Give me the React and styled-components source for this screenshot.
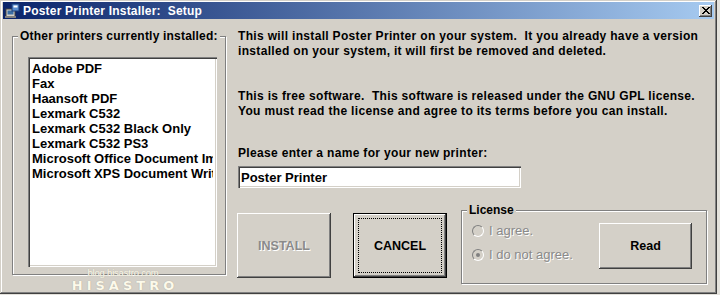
import React from "react";
import styled, { createGlobalStyle } from "styled-components";

const GlobalStyle = createGlobalStyle`
  html, body {
    margin: 0;
    padding: 0;
    background: #e4e2dc;
  }
  body {
    font-family: "Liberation Sans", Arial, sans-serif;
    font-size: 12px;
    font-weight: bold;
    color: #000;
  }
`;

const Window = styled.div`
  position: relative;
  box-sizing: border-box;
  width: 717px;
  height: 294px;
  padding: 2px 3px 3px 3px;
  background: #d4d0c8;
  box-shadow: inset -1px -1px 0 #404040, inset 1px 1px 0 #d4d0c8,
    inset -2px -2px 0 #808080, inset 2px 2px 0 #ffffff;
  display: flex;
  flex-direction: column;
`;

const TitleBar = styled.div`
  height: 17px;
  display: flex;
  align-items: center;
  padding: 0 2px 0 1px;
  background: linear-gradient(to right, #0a246a, #a6caf0);
  color: #fff;
  font-size: 12px;
`;

const TitleText = styled.span`
  flex: 1;
  margin-left: 3px;
  letter-spacing: 0.2px;
`;

const CloseButton = styled.div`
  width: 13px;
  height: 12px;
  display: flex;
  align-items: center;
  justify-content: center;
  background: #d4d0c8;
  box-shadow: inset -1px -1px 0 #404040, inset 1px 1px 0 #ffffff,
    inset -2px -2px 0 #808080;
`;

const Body = styled.div`
  flex: 1;
  display: flex;
  padding: 10px 0 0 9px;
`;

const Group = styled.fieldset`
  box-sizing: border-box;
  margin: 0;
  padding: 0;
  width: ${(p) => p.$w}px;
  height: ${(p) => p.$h}px;
  border: 1px solid #808080;
  border-radius: 0;
  box-shadow: inset 1px 1px 0 #ffffff, 1px 1px 0 #ffffff;
`;

const Legend = styled.legend`
  padding: 0 2px 0 2px;
  margin-left: 5px;
  line-height: 14px;
  white-space: nowrap;
  letter-spacing: ${(p) => p.$ls || 0}px;
  background: #d4d0c8;
`;

const ListBox = styled.div`
  box-sizing: border-box;
  width: 189px;
  height: 210px;
  margin: 14px 0 0 15px;
  padding: 4px 4px 3px 4px;
  background: #fff;
  overflow: hidden;
  box-shadow: inset 1px 1px 0 #808080, inset 2px 2px 0 #404040,
    inset -1px -1px 0 #ffffff, inset -2px -2px 0 #d4d0c8;
`;

const ListItem = styled.div`
  white-space: nowrap;
  overflow: hidden;
  font-size: 13px;
  line-height: 15px;
`;

const RightColumn = styled.div`
  display: flex;
  flex-direction: column;
  margin-left: 12px;
  width: 472px;
`;

const Paragraph = styled.p`
  margin: ${(p) => p.$mt}px 0 0 0;
  line-height: 15px;
  white-space: nowrap;
  letter-spacing: 0.33px;
`;

const TextInput = styled.div`
  box-sizing: border-box;
  width: 283px;
  height: 22px;
  margin-top: 5px;
  padding: 4px 3px 0 3px;
  background: #fff;
  font-size: 13px;
  box-shadow: inset 1px 1px 0 #808080, inset 2px 2px 0 #404040,
    inset -1px -1px 0 #ffffff, inset -2px -2px 0 #d4d0c8;
`;

const BottomRow = styled.div`
  display: flex;
  align-items: flex-start;
  margin-top: 15px;
  margin-left: -1px;
`;

const Button = styled.div`
  box-sizing: border-box;
  width: ${(p) => p.$w || 94}px;
  height: ${(p) => p.$h || 65}px;
  margin: ${(p) => p.$m || "0"};
  display: flex;
  align-items: center;
  justify-content: center;
  background: #d4d0c8;
  font-size: 12.5px;
  color: ${(p) => (p.$disabled ? "#8a8a8a" : "#000")};
  text-shadow: ${(p) => (p.$disabled ? "1px 1px 0 #ffffff" : "none")};
  border: ${(p) => (p.$default ? "1px solid #000" : "none")};
  box-shadow: inset -1px -1px 0 #404040, inset 1px 1px 0 #ffffff,
    inset -2px -2px 0 #808080, inset 2px 2px 0 #d4d0c8;
`;

const FocusRect = styled.div`
  box-sizing: border-box;
  width: calc(100% - 8px);
  height: calc(100% - 8px);
  border: 1px dotted #000;
  display: flex;
  align-items: center;
  justify-content: center;
`;

const LicenseGroup = styled(Group)`
  margin-left: 14px;
`;

const LicenseBody = styled.div`
  display: flex;
  align-items: flex-start;
  padding-left: 10px;
`;

const RadioList = styled.div`
  display: flex;
  flex-direction: column;
  gap: 11px;
  margin-top: 7px;
  width: 127px;
`;

const RadioRow = styled.div`
  display: flex;
  align-items: center;
  gap: 5px;
  color: #8a8a8a;
  text-shadow: 1px 1px 0 #ffffff;
  font-size: 13px;
  font-weight: normal;
  height: 13px;
`;

const RadioCircle = styled.span`
  box-sizing: border-box;
  width: 12px;
  height: 12px;
  border-radius: 50%;
  background: #d4d0c8;
  border: 1px solid;
  border-color: #808080 #ffffff #ffffff #808080;
  display: flex;
  align-items: center;
  justify-content: center;
`;

const RadioDot = styled.span`
  width: 4px;
  height: 4px;
  border-radius: 50%;
  background: #808080;
`;

const Watermark = styled.div`
  position: absolute;
  left: 66px;
  bottom: 1px;
  width: 114px;
  display: flex;
  flex-direction: column;
  align-items: center;
  color: #fcf9ea;
  pointer-events: none;
`;

const WatermarkSmall = styled.span`
  font-size: 9.5px;
  font-weight: normal;
  line-height: 11px;
  letter-spacing: -0.2px;
  text-shadow: 0 0 1px #a8a498;
`;

const WatermarkBig = styled.span`
  font-family: "DejaVu Sans", sans-serif;
  font-size: 13px;
  font-weight: bold;
  line-height: 15px;
  letter-spacing: 4px;
  margin-left: 4px;
  text-shadow: 0 0 1px #9c988c;
`;

const printers = [
  "Adobe PDF",
  "Fax",
  "Haansoft PDF",
  "Lexmark C532",
  "Lexmark C532 Black Only",
  "Lexmark C532 PS3",
  "Microsoft Office Document Image Writer",
  "Microsoft XPS Document Writer",
];

function AppIcon() {
  return (
    <svg width="16" height="16" viewBox="0 0 16 16">
      <rect x="2" y="6" width="9" height="8" fill="#d4d0c8" stroke="#404040" />
      <rect x="3.5" y="7.5" width="6" height="4" fill="#3a6ea5" />
      <rect x="8" y="1" width="7" height="7" fill="#5b8fd0" stroke="#1c3f7a" />
      <rect x="9.5" y="2.5" width="4" height="2" fill="#fff" />
      <rect x="1" y="13" width="11" height="2" fill="#808080" />
    </svg>
  );
}

export default function App() {
  return (
    <>
      <GlobalStyle />
      <Window>
        <TitleBar>
          <AppIcon />
          <TitleText>Poster Printer Installer:&nbsp; Setup</TitleText>
          <CloseButton>
            <svg width="8" height="7" viewBox="0 0 8 7">
              <path d="M0 0 L7 7 M1 0 L8 7 M7 0 L0 7 M8 0 L1 7" stroke="#000" strokeWidth="1" />
            </svg>
          </CloseButton>
        </TitleBar>
        <Body>
          <Group $w={214} $h={246}>
            <Legend $ls={0.2}>Other printers currently installed:</Legend>
            <ListBox>
              {printers.map((name) => (
                <ListItem key={name}>{name}</ListItem>
              ))}
            </ListBox>
          </Group>
          <RightColumn>
            <Paragraph $mt={0}>
              This will install Poster Printer on your system.&nbsp; It you already have a version
              <br />
              installed on your system, it will first be removed and deleted.
            </Paragraph>
            <Paragraph $mt={30}>
              This is free software.&nbsp; This software is released under the GNU GPL license.
              <br />
              You must read the license and agree to its terms before you can install.
            </Paragraph>
            <Paragraph $mt={27}>Please enter a name for your new printer:</Paragraph>
            <TextInput>Poster Printer</TextInput>
            <BottomRow>
              <Button $disabled $m="10px 0 0 0">INSTALL</Button>
              <Button $default $m="10px 0 0 22px">
                <FocusRect>CANCEL</FocusRect>
              </Button>
              <LicenseGroup $w={246} $h={81}>
                <Legend>License</Legend>
                <LicenseBody>
                  <RadioList>
                    <RadioRow>
                      <RadioCircle />I agree.
                    </RadioRow>
                    <RadioRow>
                      <RadioCircle>
                        <RadioDot />
                      </RadioCircle>
                      I do not agree.
                    </RadioRow>
                  </RadioList>
                  <Button $w={93} $h={46} $m="6px 0 0 0">Read</Button>
                </LicenseBody>
              </LicenseGroup>
            </BottomRow>
          </RightColumn>
        </Body>
        <Watermark>
          <WatermarkSmall>blog.hisastro.com</WatermarkSmall>
          <WatermarkBig>HISASTRO</WatermarkBig>
        </Watermark>
      </Window>
    </>
  );
}
